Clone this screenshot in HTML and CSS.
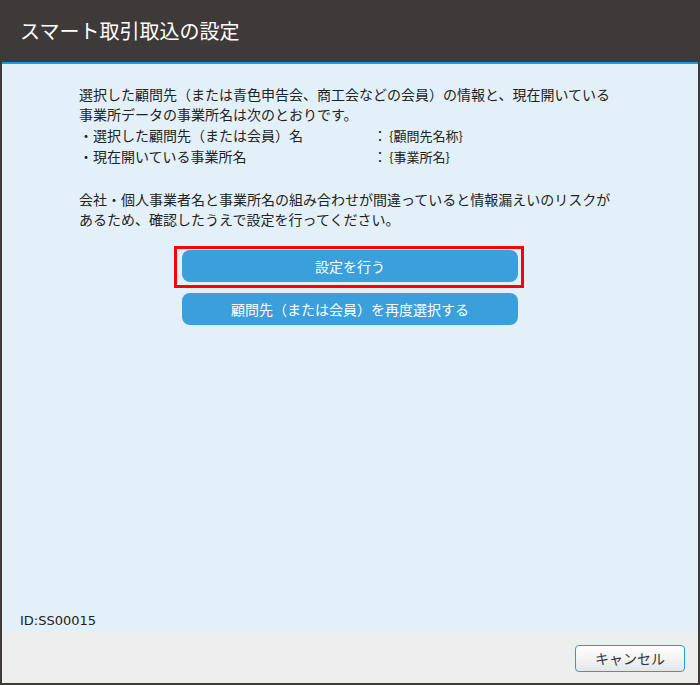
FILE: index.html
```html
<html>
  <head>
    <meta charset="utf-8">
    <link rel="stylesheet" href="styles.css">
  </head>
  <body>
    <div class="dialog">
      <div class="header">
        <p class="title">スマート取引取込の設定</p>
      </div>
      <div class="content">
        <div class="main">
          <p class="lead">選択した顧問先（または青色申告会、商工会などの会員）の情報と、現在開いている<br>事業所データの事業所名は次のとおりです。</p>
          <div class="info">
            <span class="dot">・</span>
            <span class="label">選択した顧問先（または会員）名</span>
            <span class="colon">：</span>
            <span class="value">{顧問先名称}</span>
            <span class="dot">・</span>
            <span class="label">現在開いている事業所名</span>
            <span class="colon">：</span>
            <span class="value">{事業所名}</span>
          </div>
          <p class="warn">会社・個人事業者名と事業所名の組み合わせが間違っていると情報漏えいのリスクが<br>あるため、確認したうえで設定を行ってください。</p>
          <div class="btns">
            <div class="focus">
              <div class="btn">設定を行う</div>
            </div>
            <div class="btn">顧問先（または会員）を再度選択する</div>
          </div>
        </div>
        <p class="screenId">ID:SS00015</p>
      </div>
      <div class="footer">
        <div class="cancelBtn">キャンセル</div>
      </div>
    </div>
  </body>
</html>
```

FILE: styles.css
```css
* {
  padding: 0;
  margin: 0;
  box-sizing: border-box;
}
body {
  font-family: "Noto Sans CJK JP", "Noto Sans", sans-serif;
  color: #222;
  font-size: 14px;
}
.dialog {
  width: 700px;
  height: 685px;
  padding: 0 2px 2px;
  background-color: #3e3a39;
  display: flex;
  flex-direction: column;
}
.header {
  height: 64px;
  padding-left: 18px;
  border-bottom: 2px solid #1a9be0;
  display: flex;
  align-items: center;
}
.title {
  color: white;
  font-size: 20px;
  margin-top: -2px;
}
.content {
  flex: 1;
  background-color: #e3f0f9;
  display: flex;
  flex-direction: column;
  justify-content: space-between;
  padding: 20px 0 1px 18px;
}
.main {
  padding-left: 59px;
}
.lead, .warn {
  line-height: 20px;
}
.info {
  display: grid;
  grid-template-columns: 14px 280px 16px auto;
  line-height: 21px;
  margin-top: 1px;
  align-items: center;
}
.value {
  font-size: 13px;
}
.warn {
  margin-top: 22px;
}
.btns {
  display: flex;
  flex-direction: column;
  align-items: flex-start;
  gap: 5px;
  margin-top: 17px;
  padding-left: 103px;
}
.focus {
  border: 3px solid #ff0000;
  padding: 1px 3px 3px 5px;
  margin-left: -8px;
}
.btn {
  width: 336px;
  height: 32px;
  line-height: 32px;
  border-radius: 8px;
  background-color: #3a9fdb;
  color: white;
  text-align: center;
}
.screenId {
  font-family: "DejaVu Sans", sans-serif;
  font-size: 13px;
  line-height: 20px;
}
.footer {
  height: 51px;
  background-color: #eeeeee;
  display: flex;
  justify-content: flex-end;
  align-items: flex-start;
  padding: 13px 13px 0 0;
}
.cancelBtn {
  width: 110px;
  height: 27px;
  line-height: 25px;
  border: 1px solid #2a9ae0;
  border-radius: 4px;
  background: linear-gradient(#ffffff, #e6e6e6);
  text-align: center;
  color: #333;
}
```
